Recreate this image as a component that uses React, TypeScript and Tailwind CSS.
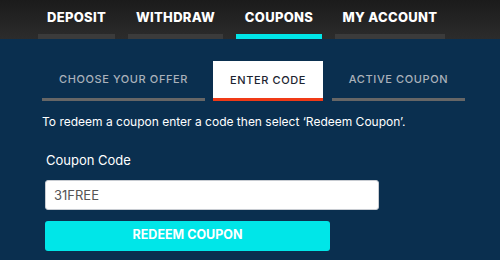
export default function App() {
  return (
    <div className="h-[260px] w-[500px] overflow-hidden bg-[#0a2f4f] font-['Inter',sans-serif]">

      {/* Main tabs */}

      <nav className="flex h-[39px] gap-[13px] bg-gradient-to-b from-[#1b1b1b] to-[#2c2c2c] pl-[38px]">
        <a className="flex w-[77px] flex-col justify-between border-b-[5px] border-[#3b3b3b] pt-[8px] text-center text-[13px] font-extrabold tracking-[0.3px] text-white">
          DEPOSIT
        </a>
        <a className="flex w-[95px] flex-col justify-between border-b-[5px] border-[#3b3b3b] pt-[8px] text-center text-[13px] font-extrabold tracking-[0.3px] text-white">
          WITHDRAW
        </a>
        <a className="flex w-[86px] flex-col justify-between border-b-[5px] border-[#00e6e8] pt-[8px] text-center text-[13px] font-extrabold tracking-[0.3px] text-white">
          COUPONS
        </a>
        <a className="flex w-[110px] flex-col justify-between border-b-[5px] border-[#3b3b3b] pt-[8px] text-center text-[13px] font-extrabold tracking-[0.3px] text-white">
          MY ACCOUNT
        </a>
      </nav>

      {/* Coupon tabs */}

      <div className="flex items-end pl-[42px] pt-[22px]">
        <div className="flex h-[40px] w-[163px] items-center justify-center border-b-[3px] border-[#666666] text-[11px] font-medium tracking-[0.6px] text-[#aab2bb]">
          CHOOSE YOUR OFFER
        </div>
        <div className="ml-[8px] flex h-[40px] w-[110px] items-center justify-center border-b-[3px] border-[#f03a17] bg-white pt-[1px] text-[11px] font-medium tracking-[0.6px] text-[#1c2430]">
          ENTER CODE
        </div>
        <div className="ml-[9px] flex h-[40px] w-[133px] items-center justify-center border-b-[3px] border-[#666666] text-[11px] font-medium tracking-[0.6px] text-[#aab2bb]">
          ACTIVE COUPON
        </div>
      </div>

      {/* Form */}

      <div className="pl-[42px] pt-[12px]">
        <p className="text-[12px] text-white">
          To redeem a coupon enter a code then select ‘Redeem Coupon’.
        </p>

        <div className="pl-[3px]">
          <label className="mt-[20px] block pl-[1px] text-[13px] text-white">
            Coupon Code
          </label>

          <input
            defaultValue="31FREE"
            className="mt-[9px] block h-[30px] w-[334px] rounded-[3px] border border-[#c8ccd2] bg-white px-[8px] text-[13px] text-[#555555] outline-none"
          />

          <button className="mt-[11px] block h-[30px] w-[285px] rounded-[3px] bg-[#00e6e8] text-[12.5px] font-bold text-white">
            REDEEM COUPON
          </button>
        </div>
      </div>

    </div>
  );
}
